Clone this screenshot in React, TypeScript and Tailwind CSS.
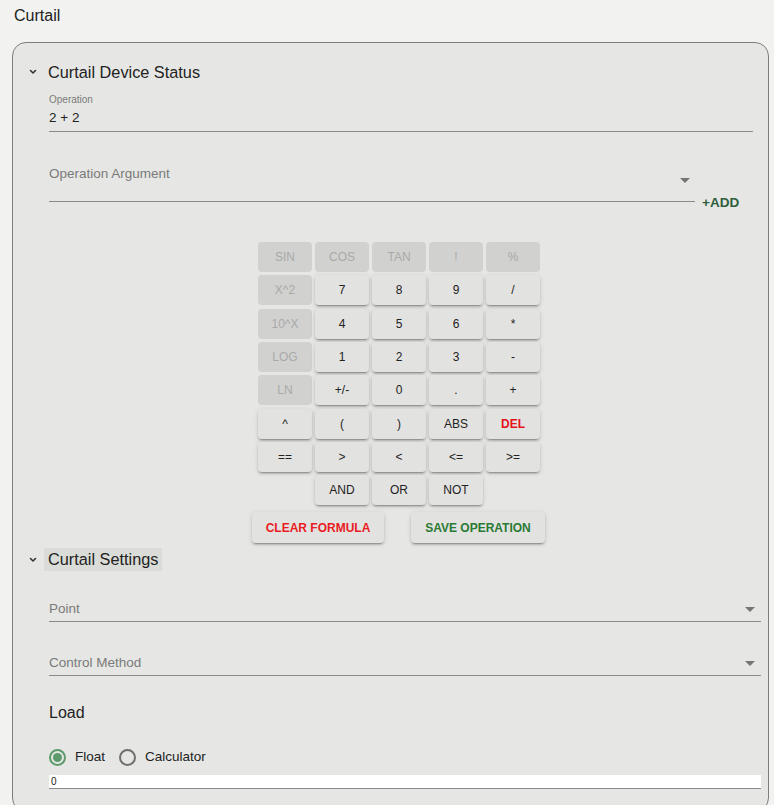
import React from 'react';

type Key = { label: string; disabled?: boolean; tone?: 'red' };

const rows: Key[][] = [
  [{ label: 'SIN', disabled: true }, { label: 'COS', disabled: true }, { label: 'TAN', disabled: true }, { label: '!', disabled: true }, { label: '%', disabled: true }],
  [{ label: 'X^2', disabled: true }, { label: '7' }, { label: '8' }, { label: '9' }, { label: '/' }],
  [{ label: '10^X', disabled: true }, { label: '4' }, { label: '5' }, { label: '6' }, { label: '*' }],
  [{ label: 'LOG', disabled: true }, { label: '1' }, { label: '2' }, { label: '3' }, { label: '-' }],
  [{ label: 'LN', disabled: true }, { label: '+/-' }, { label: '0' }, { label: '.' }, { label: '+' }],
  [{ label: '^' }, { label: '(' }, { label: ')' }, { label: 'ABS' }, { label: 'DEL', tone: 'red' }],
  [{ label: '==' }, { label: '>' }, { label: '<' }, { label: '<=' }, { label: '>=' }],
];

function Chevron() {
  return (
    <span className="flex w-[12px] justify-center">
      <svg width="8" height="6" viewBox="0 0 8 6" fill="none" stroke="#333" strokeWidth="1.6" strokeLinecap="round" strokeLinejoin="round">
        <path d="M1.5 1.5 L4 4 L6.5 1.5" />
      </svg>
    </span>
  );
}

function Caret() {
  return (
    <svg width="10" height="5" viewBox="0 0 10 5" fill="#757575">
      <path d="M0 0 L10 0 L5 5 Z" />
    </svg>
  );
}

function CalcKey({ k }: { k: Key }) {
  if (k.disabled) {
    return (
      <div className="flex h-[30px] items-center justify-center rounded-[4px] bg-[#d1d2cf] text-[12px] text-[#a9a9a9]">
        {k.label}
      </div>
    );
  }
  return (
    <div
      className={`flex h-[30px] items-center justify-center rounded-[4px] bg-[#e2e2e1] text-[12px] shadow-[0_3px_1px_-2px_rgba(0,0,0,0.2),0_2px_2px_0_rgba(0,0,0,0.14),0_1px_5px_0_rgba(0,0,0,0.12)] ${
        k.tone === 'red' ? 'font-bold text-[#e5121b]' : 'text-[#222]'
      }`}
    >
      {k.label}
    </div>
  );
}

export default function App() {
  return (
    <div className="h-[805px] overflow-hidden bg-[#f2f3f0] font-['Liberation_Sans',Arial,sans-serif] text-[#222]">
      <div className="pl-[14px] pt-[6px] text-[16px] leading-[20px]">Curtail</div>

      <div className="ml-[12px] mt-[16px] h-[770px] w-[757px] rounded-[14px] border border-[#7d7d7d] bg-[#e6e7e4] pt-[17px]">
        {/* Curtail Device Status */}
        <div className="ml-[14px] flex h-[24px] items-center">
          <Chevron />
          <span className="ml-[5px] px-[4px] text-[16.3px] leading-[24px]">Curtail Device Status</span>
        </div>

        <div className="ml-[36px] mt-[9px] w-[704px] border-b border-[#8a8a8a] pb-[2px]">
          <div className="h-[14px] text-[10px] leading-[14px] text-[#7a7a7a]">Operation</div>
          <div className="h-[22px] text-[13.5px] leading-[22px]">2 + 2</div>
        </div>

        <div className="ml-[36px] mt-[32px] flex items-end">
          <div className="w-[646px] border-b border-[#8a8a8a]">
            <div className="flex items-end justify-between">
              <span className="text-[13.5px] leading-[20px] text-[#7a7a7a]">Operation Argument</span>
              <span className="mb-[1px] mr-[5px] flex">
                <Caret />
              </span>
            </div>
            <div className="h-[17px]" />
          </div>
          <span className="mb-[-9px] ml-[7px] text-[13.5px] font-bold leading-[16px] text-[#2f5e3c]">+ADD</span>
        </div>

        {/* calculator */}
        <div className="ml-[245px] mt-[40px] grid w-[282px] grid-cols-5 gap-x-[3px] gap-y-[3.33px]">
          {rows.flat().map((k, i) => (
            <CalcKey key={i} k={k} />
          ))}
          <div />
          <CalcKey k={{ label: 'AND' }} />
          <CalcKey k={{ label: 'OR' }} />
          <CalcKey k={{ label: 'NOT' }} />
        </div>

        <div className="ml-[239px] mt-[7px] flex gap-[27px]">
          <div className="flex h-[31px] w-[132px] items-center justify-center rounded-[4px] bg-[#e2e2e1] text-[12px] font-bold text-[#ea1c24] shadow-[0_3px_1px_-2px_rgba(0,0,0,0.2),0_2px_2px_0_rgba(0,0,0,0.14),0_1px_5px_0_rgba(0,0,0,0.12)]">
            CLEAR FORMULA
          </div>
          <div className="flex h-[31px] w-[134px] items-center justify-center rounded-[4px] bg-[#e2e2e1] text-[12px] font-bold text-[#2a7a34] shadow-[0_3px_1px_-2px_rgba(0,0,0,0.2),0_2px_2px_0_rgba(0,0,0,0.14),0_1px_5px_0_rgba(0,0,0,0.12)]">
            SAVE OPERATION
          </div>
        </div>

        {/* Curtail Settings */}
        <div className="ml-[14px] mt-[5px] flex h-[23px] items-center">
          <Chevron />
          <span className="ml-[5px] bg-[#dadcd8] px-[4px] text-[16.3px] leading-[23px]">Curtail Settings</span>
        </div>

        <div className="ml-[36px] mt-[28px] w-[712px] border-b border-[#8a8a8a] pb-[2px]">
          <div className="flex items-center justify-between">
            <span className="text-[13.5px] leading-[20px] text-[#7a7a7a]">Point</span>
            <span className="mr-[6px] flex">
              <Caret />
            </span>
          </div>
        </div>

        <div className="ml-[36px] mt-[31px] w-[712px] border-b border-[#8a8a8a] pb-[2px]">
          <div className="flex items-center justify-between">
            <span className="text-[13.5px] leading-[20px] text-[#7a7a7a]">Control Method</span>
            <span className="mr-[6px] flex">
              <Caret />
            </span>
          </div>
        </div>

        <div className="ml-[36px] mt-[25px] text-[16px] leading-[24px]">Load</div>

        <div className="ml-[36px] mt-[20px] flex h-[24px] items-center text-[13.5px]">
          <span className="flex h-[17px] w-[17px] items-center justify-center rounded-full border-2 border-[#5d9a6b]">
            <span className="h-[9px] w-[9px] rounded-full bg-[#5d9a6b]" />
          </span>
          <span className="ml-[9px]">Float</span>
          <span className="ml-[14px] h-[17px] w-[17px] rounded-full border-2 border-[#6f6f6f]" />
          <span className="ml-[9px]">Calculator</span>
        </div>

        <div className="ml-[36px] mt-[6px] h-[14px] w-[712px] border-b border-[#8a8a8a] bg-white pl-[2px] text-[10px] leading-[13px]">
          0
        </div>
      </div>
    </div>
  );
}
